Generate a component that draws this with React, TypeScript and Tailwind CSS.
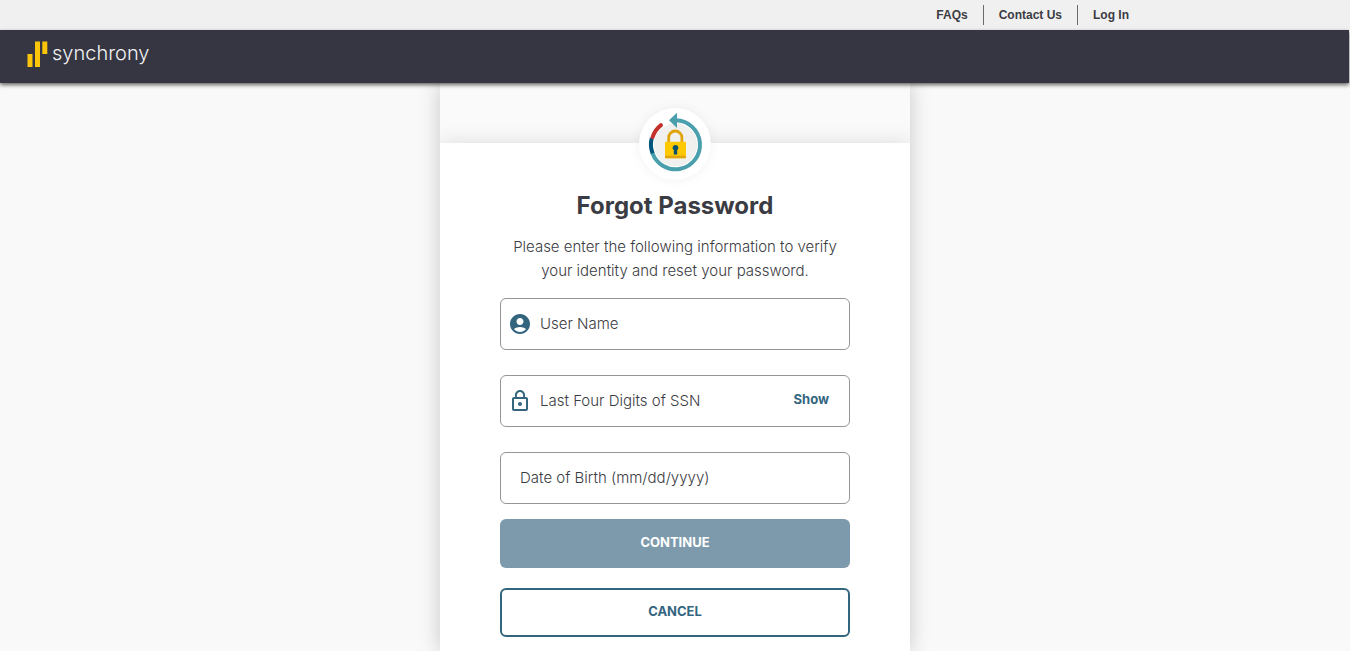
import { useId, useState, type FormEvent, type ReactNode } from "react";
import { MdAccountCircle, MdLockOutline } from "react-icons/md";

const links = ["FAQs", "Contact Us", "Log In"];

function TopLinks() {
  return (
    <nav className="flex h-[30px] items-center justify-end bg-[#f0f0f0] pr-[206px] font-['Liberation_Sans',Arial,sans-serif] text-xs font-bold text-[#3b3c43]">
      {links.map((link, i) => (
        <a
          key={link}
          href="#"
          className={`flex h-5 items-center px-[15px] ${i > 0 ? "border-l border-[#6b6c70]" : ""}`}
        >
          {link}
        </a>
      ))}
    </nav>
  );
}

function Logo() {
  return (
    <a href="#" className="flex items-center gap-1 text-[#f2f2f3]">
      <svg width="21" height="27" viewBox="0 0 21 27" fill="#fbc60a" aria-hidden="true">
        <rect x="0.5" y="13" width="5" height="13" />
        <rect x="8" y="0.5" width="5" height="25.5" />
        <rect x="15.3" y="0.5" width="5" height="12.5" />
      </svg>
      <span className="pb-1 font-['Inter',sans-serif] text-xl font-light leading-6">synchrony</span>
    </a>
  );
}

function ResetBadge() {
  return (
    <div className="flex size-[72px] items-center justify-center rounded-full bg-white shadow-[0_0_12px_rgba(0,0,0,0.06)]">
      <svg width="60" height="60" viewBox="0 0 60 60" fill="none" className="overflow-visible" aria-hidden="true">
        <circle cx="30.5" cy="30.8" r="21.5" fill="#f0f0ee" />
        <path d="M31 6.3A24.5 24.5 0 1 1 7.2 38.4" stroke="#4a9fac" strokeWidth="4" />
        <path d="M7.6 39.3A24.5 24.5 0 0 1 6.8 24" stroke="#03567b" strokeWidth="4" />
        <path d="M7.6 23.2A24.5 24.5 0 0 1 16 11.2" stroke="#c4302b" strokeWidth="4" strokeLinecap="round" />
        <path d="M24 6.3 32 -1.3V14Z" fill="#4a9fac" />
        <path d="M23.7 29V23.6a6.6 6.6 0 0 1 13.2 0V29" stroke="#e0a50b" strokeWidth="2.8" />
        <rect x="20" y="27.7" width="21" height="16.6" rx="1" fill="#fec802" />
        <path d="M20 41.8h21v1.5a1 1 0 0 1-1 1H21a1 1 0 0 1-1-1Z" fill="#e0a50b" />
        <path d="M30.5 31a2.8 2.8 0 0 1 1.7 5.1v4.4h-3.4v-4.4A2.8 2.8 0 0 1 30.5 31Z" fill="#07506e" />
      </svg>
    </div>
  );
}

interface FieldProps {
  label: string;
  icon?: ReactNode;
  action?: ReactNode;
  type?: string;
  maxLength?: number;
}

function Field({ label, icon, action, type = "text", maxLength }: FieldProps) {
  const id = useId();

  return (
    <div className="flex h-[52px] items-center rounded-md border border-[#949597] bg-white focus-within:border-[#34657f]">
      {icon && <span className="pl-[7px] text-2xl text-[#34657f]">{icon}</span>}
      <div className="relative h-full min-w-0 flex-1">
        <input
          id={id}
          type={type}
          maxLength={maxLength}
          placeholder=" "
          className={`peer size-full bg-transparent text-[15px] outline-none ${icon ? "pl-2" : "pl-[19px]"}`}
        />
        {/* sits over the empty input and hides once something is typed */}
        <label
          htmlFor={id}
          className={`absolute inset-0 flex cursor-text items-center text-[15px] peer-[:not(:placeholder-shown)]:invisible ${
            icon ? "pl-2" : "pl-[19px]"
          }`}
        >
          {label}
        </label>
      </div>
      {action}
    </div>
  );
}

export default function App() {
  const [showSsn, setShowSsn] = useState(false);

  const handleSubmit = (e: FormEvent) => {
    e.preventDefault();
  };

  return (
    <div className="flex min-h-screen flex-col bg-[#f9f9f9] text-[#3b3c43]">
      <TopLinks />
      <header className="relative z-10 mr-px flex h-[53px] items-center bg-[#353642] px-[27px] pb-1 shadow-[0_2px_4px_rgba(0,0,0,0.6)]">
        <Logo />
      </header>

      <main className="mx-auto flex w-full max-w-[470px] flex-1 flex-col overflow-x-clip bg-[#fafafa] pt-[60px] font-['Inter',sans-serif] shadow-[0_0_20px_rgba(0,0,0,0.2)]">
        <section className="flex flex-1 flex-col items-center bg-white px-[60px] pb-[14px] shadow-[0_0_20px_rgba(0,0,0,0.12)]">
          <div className="-mt-[35px]">
            <ResetBadge />
          </div>
          <h1 className="mt-2 text-2xl font-bold leading-9">Forgot Password</h1>
          <p className="mt-[11px] text-center text-[15px] font-light leading-6">
            Please enter the following information to verify your identity and reset your password.
          </p>

          <form onSubmit={handleSubmit} className="mt-[15px] flex w-full flex-col font-light">
            <div className="flex flex-col gap-[25px]">
              <Field label="User Name" icon={<MdAccountCircle />} />
              <Field
                label="Last Four Digits of SSN"
                icon={<MdLockOutline />}
                type={showSsn ? "text" : "password"}
                maxLength={4}
                action={
                  <button
                    type="button"
                    onClick={() => setShowSsn(!showSsn)}
                    className="px-5 pb-0.5 text-[13px] font-bold text-[#34657f]"
                  >
                    {showSsn ? "Hide" : "Show"}
                  </button>
                }
              />
              <Field label="Date of Birth (mm/dd/yyyy)" />
            </div>
            <button
              type="submit"
              className="mt-[15px] h-[49px] rounded-md bg-[#7d9aac] pb-0.5 text-[13px] font-bold text-white"
            >
              CONTINUE
            </button>
            <button
              type="button"
              className="mt-5 h-[49px] rounded-md border-2 border-[#34657f] bg-white pb-0.5 text-[13px] font-bold text-[#34657f]"
            >
              CANCEL
            </button>
          </form>
        </section>
      </main>
    </div>
  );
}
